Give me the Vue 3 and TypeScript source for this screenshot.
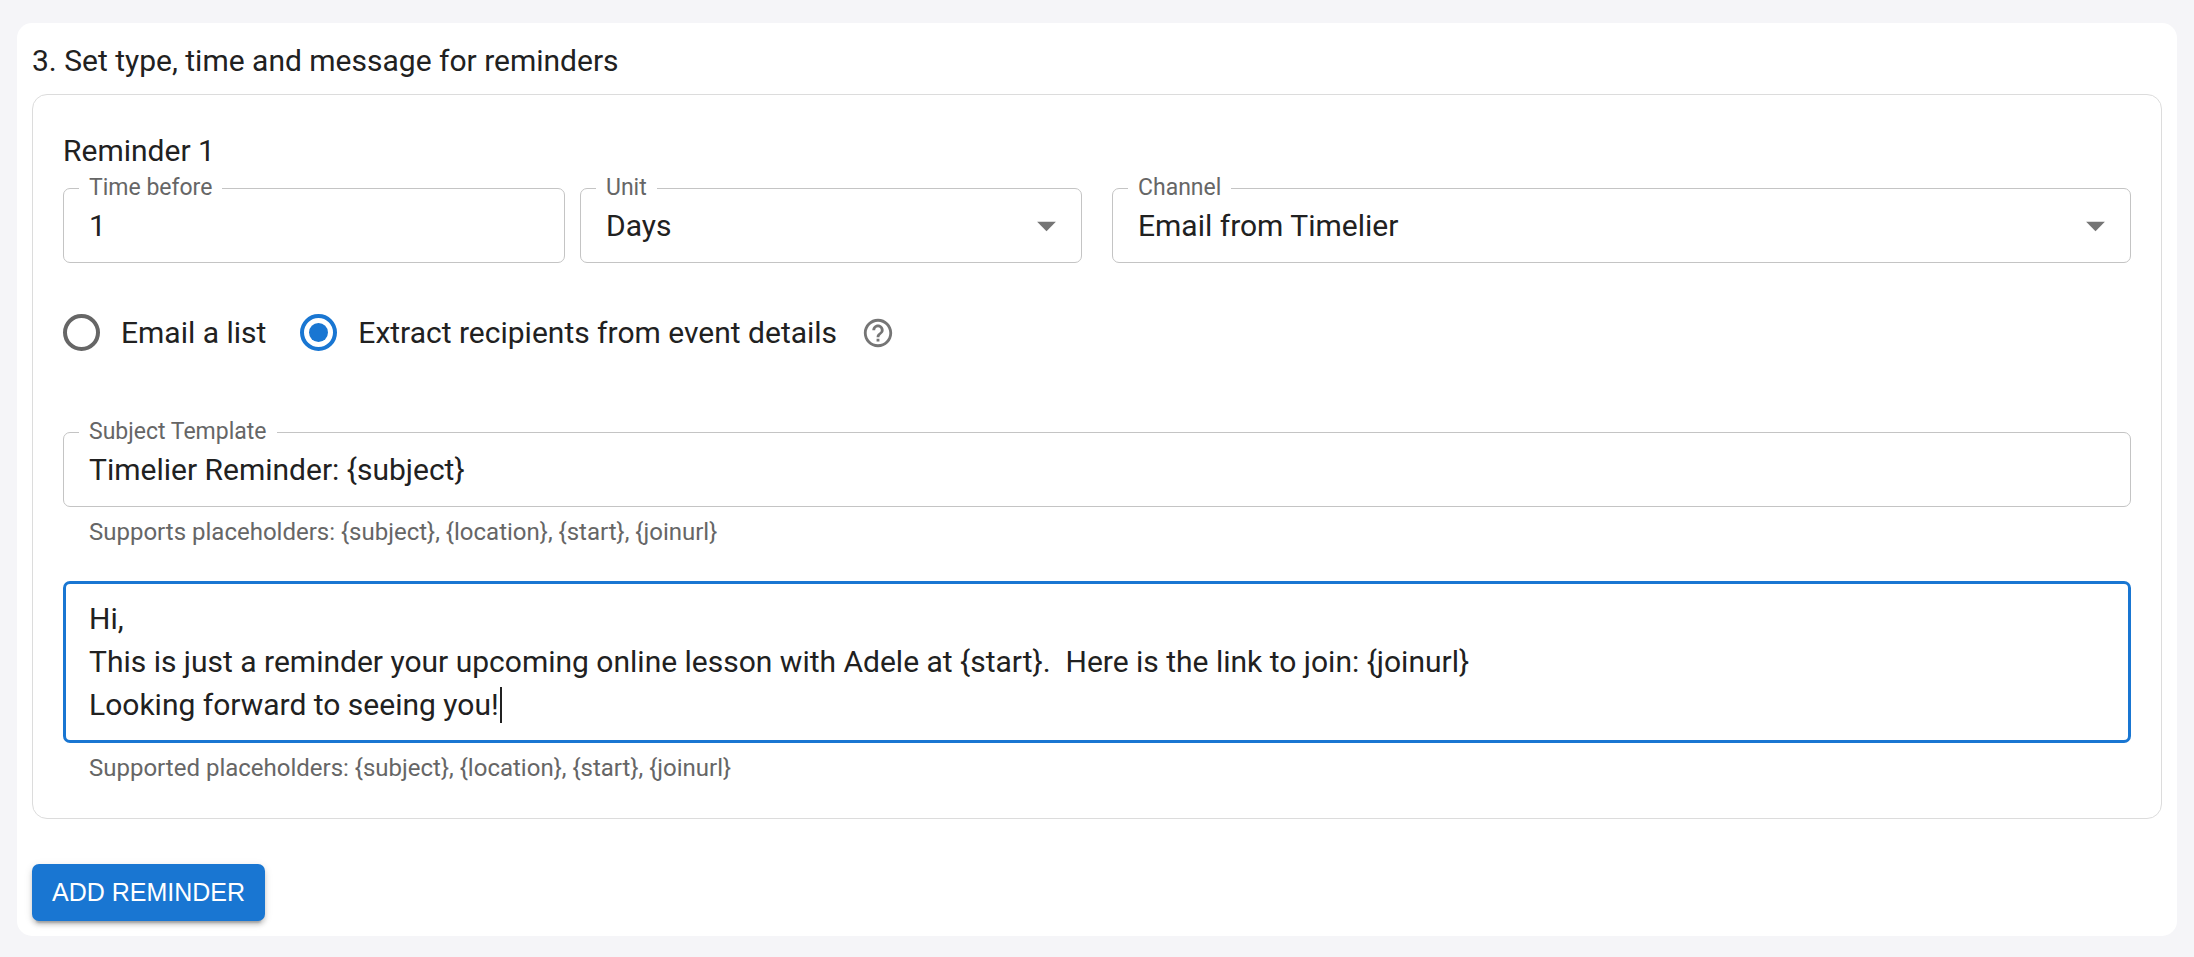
<script setup lang="ts">
import { onMounted, ref } from 'vue'

type Recipients = 'list' | 'extract'

const timeBefore = ref('1')
const unit = ref('Days')
const channel = ref('Email from Timelier')
const recipients = ref<Recipients>('extract')
const subject = ref('Timelier Reminder: {subject}')
const message = ref(
  'Hi,\nThis is just a reminder your upcoming online lesson with Adele at {start}.  Here is the link to join: {joinurl}\nLooking forward to seeing you!'
)

const messageBox = ref<HTMLTextAreaElement | null>(null)

// The drawn caret marks the end of the default message until the user takes over.
const untouched = ref(true)

onMounted(() => {
  const box = messageBox.value
  if (!box) return
  box.focus()
  box.setSelectionRange(box.value.length, box.value.length)
})
</script>

<template>
  <main class="panel">
    <h2 class="heading">3. Set type, time and message for reminders</h2>

    <section class="reminder">
      <h3 class="heading">Reminder 1</h3>

      <div class="row">
        <div class="pair">
          <div class="field">
            <label for="time-before">Time before</label>
            <input id="time-before" v-model="timeBefore" class="control" type="text" />
          </div>
          <div class="field">
            <label for="unit">Unit</label>
            <select id="unit" v-model="unit" class="control">
              <option>Minutes</option>
              <option>Hours</option>
              <option>Days</option>
            </select>
            <svg class="arrow" viewBox="0 0 24 24" aria-hidden="true"><path d="M7 10l5 5 5-5z" /></svg>
          </div>
        </div>
        <div class="field">
          <label for="channel">Channel</label>
          <select id="channel" v-model="channel" class="control">
            <option>Email from Timelier</option>
          </select>
          <svg class="arrow" viewBox="0 0 24 24" aria-hidden="true"><path d="M7 10l5 5 5-5z" /></svg>
        </div>
      </div>

      <div class="choices">
        <label class="choice">
          <input v-model="recipients" type="radio" name="recipients" value="list" />
          <span>Email a list</span>
        </label>
        <label class="choice">
          <input v-model="recipients" type="radio" name="recipients" value="extract" />
          <span>Extract recipients from event details</span>
        </label>
        <button class="help" type="button" aria-label="Help">
          <svg viewBox="0 0 24 24" aria-hidden="true">
            <path
              d="M11 18h2v-2h-2v2zm1-16C6.48 2 2 6.48 2 12s4.48 10 10 10 10-4.48 10-10S17.52 2 12 2zm0 18c-4.41 0-8-3.59-8-8s3.59-8 8-8 8 3.59 8 8-3.59 8-8 8zm0-14c-2.21 0-4 1.79-4 4h2c0-1.1.9-2 2-2s2 .9 2 2c0 2-3 1.75-3 5h2c0-2.25 3-2.5 3-5 0-2.21-1.79-4-4-4z"
            />
          </svg>
        </button>
      </div>

      <div class="field">
        <label for="subject">Subject Template</label>
        <input id="subject" v-model="subject" class="control" type="text" aria-describedby="subject-hint" />
      </div>
      <p id="subject-hint" class="hint">Supports placeholders: {subject}, {location}, {start}, {joinurl}</p>

      <div class="message-field">
        <textarea
          ref="messageBox"
          v-model="message"
          class="message"
          :class="{ untouched }"
          rows="3"
          aria-label="Message"
          aria-describedby="message-hint"
          @keydown="untouched = false"
          @pointerdown="untouched = false"
          @blur="untouched = false"
        ></textarea>
        <span v-if="untouched" class="caret" aria-hidden="true"></span>
      </div>
      <p id="message-hint" class="hint">Supported placeholders: {subject}, {location}, {start}, {joinurl}</p>
    </section>

    <button class="add" type="button">ADD REMINDER</button>
  </main>
</template>

<style>
body {
  margin: 0;
  background: #f5f5f8;
}
</style>

<style scoped>
.panel {
  margin: 23px 17px 21px;
  padding: 15px;
  border-radius: 15px;
  background: #fff;
  color: #212121;
  font-family: Roboto, sans-serif;
  font-size: 30px;
}

.panel *,
.panel {
  box-sizing: border-box;
}

.heading {
  margin: 0;
  font-size: 30px;
  font-weight: 400;
  line-height: 45px;
}

.reminder {
  margin-top: 11px;
  padding: 33px 30px 31px;
  border: 1px solid #dcdcdc;
  border-radius: 15px;
}

.row {
  display: grid;
  grid-template-columns: 1fr 1fr;
  gap: 30px;
  margin-top: 15px;
}

.pair {
  display: grid;
  grid-template-columns: 1fr 1fr;
  gap: 15px;
}

.field {
  position: relative;
}

.field label {
  position: absolute;
  top: -13px;
  left: 16px;
  padding: 0 10px;
  background: #fff;
  color: #666;
  font-size: 23px;
  line-height: 26px;
}

.control {
  display: block;
  width: 100%;
  height: 75px;
  margin: 0;
  padding: 0 25px;
  border: 1px solid #c4c4c4;
  border-radius: 7px;
  outline: none;
  appearance: none;
  background: #fff;
  color: inherit;
  font: inherit;
}

.arrow {
  position: absolute;
  top: 15px;
  right: 13px;
  width: 45px;
  height: 45px;
  fill: #757575;
  pointer-events: none;
}

.choices {
  display: flex;
  align-items: center;
  height: 45px;
  margin: 47px 0 77px;
}

.choice {
  display: flex;
  align-items: center;
  margin-right: 34px;
}

.choice input {
  display: grid;
  place-items: center;
  width: 37px;
  height: 37px;
  margin: 0 21px 0 0;
  border: 4px solid #666;
  border-radius: 50%;
  appearance: none;
}

.choice input:checked {
  border-color: #1976d2;
}

.choice input:checked::before {
  width: 19px;
  height: 19px;
  border-radius: 50%;
  background: #1976d2;
  content: '';
}

.help {
  display: flex;
  margin: 0 0 0 -10px;
  padding: 0;
  border: 0;
  background: none;
}

.help svg {
  width: 34px;
  height: 34px;
  fill: #757575;
}

.hint {
  margin: 7px 26px 0;
  color: #666;
  font-size: 24px;
  line-height: 37px;
}

.message-field {
  position: relative;
  margin-top: 30px;
}

.message {
  display: block;
  width: 100%;
  margin: 0;
  padding: 13px 23px 14px;
  border: 3px solid #1976d2;
  border-radius: 7px;
  outline: none;
  resize: none;
  overflow: hidden;
  background: #fff;
  color: inherit;
  font: inherit;
  line-height: 43px;
}

.message.untouched {
  caret-color: transparent;
}

.caret {
  position: absolute;
  bottom: 20px;
  left: 437px;
  width: 2px;
  height: 36px;
  background: #212121;
}

.add {
  display: block;
  height: 57px;
  margin-top: 45px;
  padding: 0 20px;
  border: 0;
  border-radius: 7px;
  background: #1976d2;
  box-shadow:
    0 6px 2px -4px rgba(0, 0, 0, 0.2),
    0 4px 4px 0 rgba(0, 0, 0, 0.14),
    0 2px 9px 0 rgba(0, 0, 0, 0.12);
  color: #fff;
  font-family: 'Liberation Sans', Arial, sans-serif;
  font-size: 25px;
}
</style>
